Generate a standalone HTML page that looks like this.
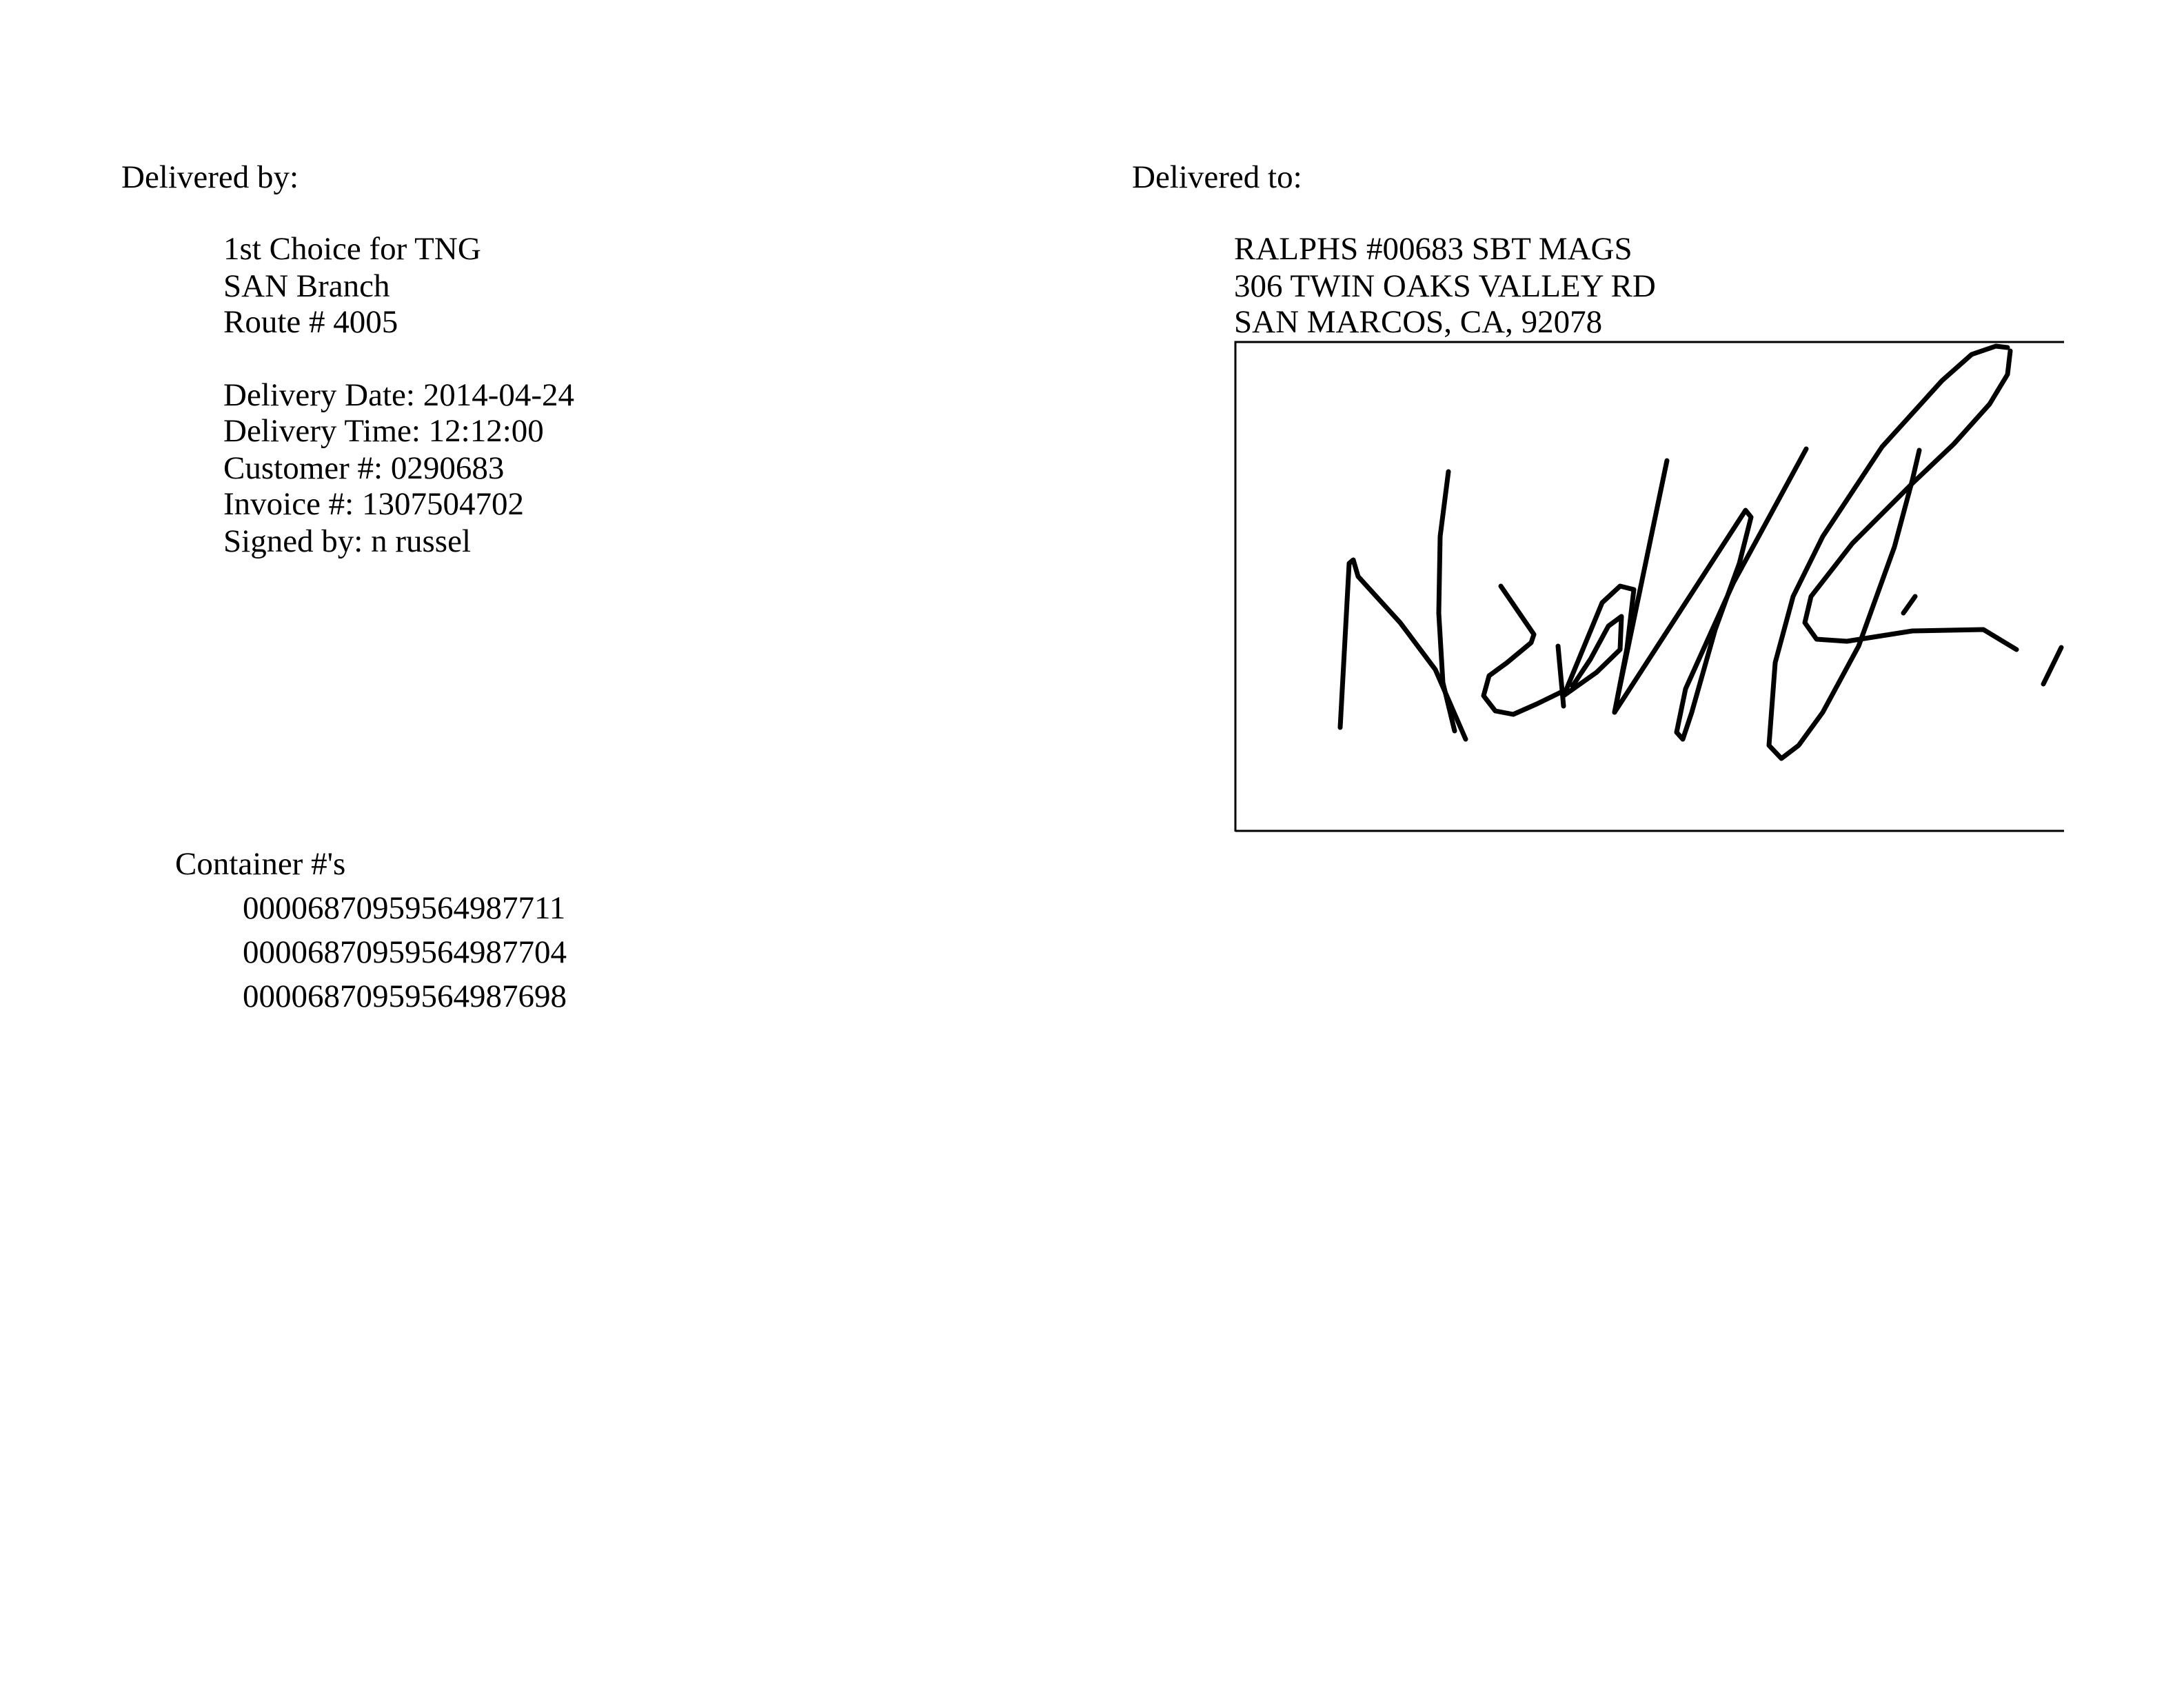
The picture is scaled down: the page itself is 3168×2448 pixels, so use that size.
<!DOCTYPE html>
<html><head><meta charset="utf-8"><style>
html,body{margin:0;padding:0;background:#fff;}
body{width:3168px;height:2448px;position:relative;overflow:hidden;font-family:"Liberation Serif",serif;font-size:47px;color:#000;}
.t{position:absolute;white-space:nowrap;line-height:1;}
</style></head><body>
<div class="t" style="left:176px;top:234px">Delivered by:</div>
<div class="t" style="left:1642px;top:234px">Delivered to:</div>

<div class="t" style="left:324px;top:338px">1st Choice for TNG</div>
<div class="t" style="left:324px;top:392px">SAN Branch</div>
<div class="t" style="left:324px;top:444px">Route # 4005</div>
<div class="t" style="left:324px;top:550px">Delivery Date: 2014-04-24</div>
<div class="t" style="left:324px;top:602px">Delivery Time: 12:12:00</div>
<div class="t" style="left:324px;top:656px">Customer #: 0290683</div>
<div class="t" style="left:324px;top:708px">Invoice #: 1307504702</div>
<div class="t" style="left:324px;top:762px">Signed by: n russel</div>

<div class="t" style="left:254px;top:1230px">Container #'s</div>
<div class="t" style="left:352px;top:1294px">00006870959564987711</div>
<div class="t" style="left:352px;top:1358px">00006870959564987704</div>
<div class="t" style="left:352px;top:1422px">00006870959564987698</div>

<div class="t" style="left:1790px;top:338px">RALPHS #00683 SBT MAGS</div>
<div class="t" style="left:1790px;top:392px">306 TWIN OAKS VALLEY RD</div>
<div class="t" style="left:1790px;top:444px">SAN MARCOS, CA, 92078</div>

<svg style="position:absolute;left:0;top:0" width="3168" height="2448">
<polyline points="1792,1206 1792,496 2994,496" fill="none" stroke="#000" stroke-width="3"/>
<line x1="1792" y1="1205" x2="2994" y2="1205" stroke="#000" stroke-width="3"/>
<g fill="none" stroke="#000" stroke-width="7" stroke-linecap="round" stroke-linejoin="round">
<polyline points="1944,1055 1957,817 1963,812 1970,836 2031,903 2082,971 2126,1072"/>
<polyline points="2101,684 2089,778 2087,889 2093,990 2110,1060"/>
<polyline points="2177,850 2225,920 2221,932 2186,961 2160,980 2152,1009 2169,1031 2195,1036 2229,1021 2268,1002"/>
<polyline points="2260,937 2268,1024"/>
<polyline points="2268,1009 2316,975 2350,942 2352,894 2333,908 2307,956 2281,995"/>
<polyline points="2272,1000 2298,937 2324,874 2350,850 2370,855 2360,940 2342,1033"/>
<polyline points="2418,668 2342,1033"/>
<polyline points="2342,1033 2532,740 2540,750 2523,817 2488,913 2454,1033 2441,1072 2432,1062 2445,999 2514,846 2620,651"/>
<polyline points="2912,504 2895,502 2860,514 2817,552 2730,648 2644,778 2601,865 2575,961 2566,1081 2584,1100 2609,1081 2644,1033 2696,937 2748,793 2774,696 2784,653"/>
<polyline points="2916,509 2912,543 2886,586 2834,644 2774,701 2687,788 2627,865 2618,903 2635,927 2679,930 2774,915 2877,913 2925,942"/>
<polyline points="2778,865 2761,889"/>
<polyline points="2990,939 2964,992"/>
</g>
</svg>
</body></html>
